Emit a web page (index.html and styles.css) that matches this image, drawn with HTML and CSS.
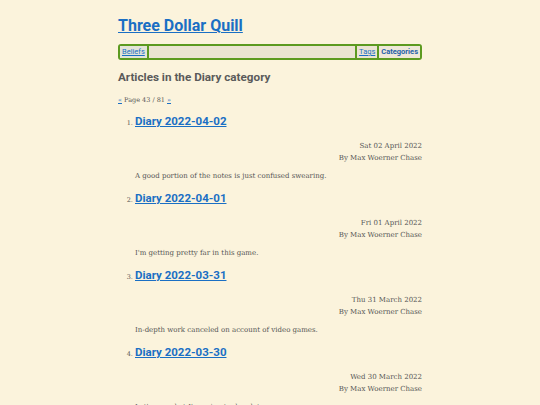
FILE: index.html
```html
<!DOCTYPE html>
<html lang="en">
<head>
<meta charset="utf-8">
<title>Three Dollar Quill — Diary</title>
<link rel="stylesheet" href="styles.css">
</head>
<body>
<div class="page">
  <header class="site-header">
    <h1 class="site-title"><a href="#">Three Dollar Quill</a></h1>
    <nav class="menu">
      <a class="menu-item first" href="#">Beliefs</a>
      <span class="menu-fill"></span>
      <a class="menu-item sep" href="#">Tags</a>
      <a class="menu-item sep current" href="#">Categories</a>
    </nav>
  </header>
  <main>
    <h2 class="section-title">Articles in the Diary category</h2>
    <p class="pager"><a href="#">«</a> Page 43 / 81 <a href="#">»</a></p>
    <ol class="articles" start="1">
      <li class="article">
        <h3 class="article-title"><a href="#">Diary 2022-04-02</a></h3>
        <div class="meta">
          <div>Sat 02 April 2022</div>
          <div>By Max Woerner Chase</div>
        </div>
        <p class="summary">A good portion of the notes is just confused swearing.</p>
      </li>
      <li class="article">
        <h3 class="article-title"><a href="#">Diary 2022-04-01</a></h3>
        <div class="meta">
          <div>Fri 01 April 2022</div>
          <div>By Max Woerner Chase</div>
        </div>
        <p class="summary">I'm getting pretty far in this game.</p>
      </li>
      <li class="article">
        <h3 class="article-title"><a href="#">Diary 2022-03-31</a></h3>
        <div class="meta">
          <div>Thu 31 March 2022</div>
          <div>By Max Woerner Chase</div>
        </div>
        <p class="summary">In-depth work canceled on account of video games.</p>
      </li>
      <li class="article">
        <h3 class="article-title"><a href="#">Diary 2022-03-30</a></h3>
        <div class="meta">
          <div>Wed 30 March 2022</div>
          <div>By Max Woerner Chase</div>
        </div>
        <p class="summary">Let's see what I'm going to do... later.</p>
      </li>
    </ol>
  </main>
</div>
</body>
</html>
```
FILE: styles.css
```css
html, body {
  margin: 0;
  padding: 0;
  background: #fbf3dc;
}
body {
  font-family: "DejaVu Serif", serif;
  color: #555;
}
.page {
  width: 304px;
  margin: 0 auto;
}
a {
  color: #1a6fc4;
}
.site-title {
  margin: 0;
  padding-top: 15px;
  font-family: Roboto, sans-serif;
  font-size: 16px;
  line-height: 22px;
  font-weight: 700;
}
.menu {
  margin-top: 7px;
  display: flex;
  align-items: stretch;
  border: 2px solid #5c9a20;
  border-radius: 3px;
  background: #ebe4d2;
  height: 12px;
  font-family: Roboto, sans-serif;
  font-size: 7.5px;
  line-height: 12px;
}
.menu-item {
  padding: 0 2px;
}
.menu-item.first {
  border-right: 2px solid #5c9a20;
  background: #e3e4d8;
}
.menu-item.sep {
  border-left: 2px solid #5c9a20;
}
.menu-item.current {
  font-weight: 700;
  text-decoration: none;
  color: #1e5fa8;
  background: #eee8d8;
}
.menu-fill {
  flex: 1;
}
.section-title {
  margin: 9px 0 0;
  font-family: Roboto, sans-serif;
  font-size: 11.7px;
  line-height: 16px;
  font-weight: 700;
  color: #5a5a5a;
}
.pager {
  margin: 10px 0 0;
  font-size: 6.5px;
  line-height: 10px;
  color: #555;
}
.articles {
  margin: 7px 0 0;
  padding-left: 17px;
  font-size: 6.5px;
}
.article {
  margin: 0;
}
.article-title {
  margin: 0;
  font-family: Roboto, sans-serif;
  font-size: 11.5px;
  line-height: 18px;
  font-weight: 700;
}
.meta {
  margin-top: 10px;
  text-align: right;
  font-size: 7px;
  line-height: 12px;
}
.summary {
  margin: 6px 0 7px;
  font-size: 7px;
  line-height: 12px;
}
```
